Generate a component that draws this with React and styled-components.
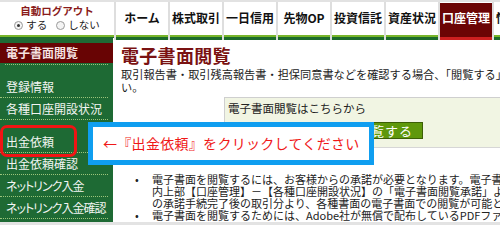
import React from "react";
import styled, { createGlobalStyle, css } from "styled-components";

const Global = createGlobalStyle`
  html, body { margin: 0; padding: 0; background: #fff; }
  body { font-family: "Noto Sans CJK JP", "Noto Sans", sans-serif; overflow: hidden; }
  * { box-sizing: border-box; }
`;

const Page = styled.div`
  position: relative;
  width: 500px;
  height: 225px;
  overflow: hidden;
  background: #fff;
`;

const stripe = css`
  background: linear-gradient(
    to bottom,
    #fff 0 33px,
    #78b52a 33px 35px,
    #1c6b2b 35px 38px
  );
`;

const Header = styled.div`
  display: flex;
  height: 38px;
  border-top: 2px solid #e2e2e2;
  ${stripe};
`;

const Logout = styled.div`
  width: 114px;
  flex: none;
  display: flex;
  flex-direction: column;
  align-items: center;
  padding-top: 3px;
`;

const LogoutTitle = styled.div`
  font-size: 10.5px;
  line-height: 12px;
  font-weight: bold;
  color: #8a1a1a;
`;

const RadioRow = styled.div`
  display: flex;
  align-items: center;
  gap: 3px;
  margin-top: 2px;
  font-size: 10.5px;
  line-height: 12px;
  color: #222;
`;

const Radio = styled.span`
  width: 9px;
  height: 9px;
  border-radius: 50%;
  border: 1px solid #9a9a9a;
  background: #f4f4f4;
  display: inline-flex;
  align-items: center;
  justify-content: center;
  margin-left: ${(p) => (p.$gap ? "6px" : "0")};
  &::after {
    content: "";
    width: 3px;
    height: 3px;
    border-radius: 50%;
    background: ${(p) => (p.$on ? "#333" : "transparent")};
  }
`;

const Tab = styled.div`
  width: 54px;
  flex: none;
  border-left: 2px solid #dedede;
  height: 38px;
  display: flex;
  justify-content: center;
  padding-top: 8px;
  font-size: 12px;
  line-height: 15px;
  font-weight: bold;
  white-space: nowrap;
  overflow: hidden;
  color: ${(p) => (p.$active ? "#fff" : "#111")};
  ${(p) =>
    p.$active
      ? css`
          background: linear-gradient(
            to bottom,
            #fff 0 1px,
            #6b0505 1px 35px,
            #cc2020 35px 38px
          );
        `
      : stripe};
  ${(p) =>
    p.$clip &&
    css`
      justify-content: flex-start;
      padding-left: 2px;
    `}
`;

const Main = styled.div`
  display: flex;
  align-items: flex-start;
  gap: 8px;
`;

const Sidebar = styled.div`
  width: 113px;
  flex: none;
  height: 187px;
  background: #1e6a34;
  padding-top: 5px;
`;

const SideHead = styled.div`
  height: 20px;
  background: #680404;
  color: #f6e2e2;
  font-size: 12px;
  line-height: 20px;
  font-weight: bold;
  padding-left: 6px;
`;

const Dots = styled.div`
  margin: 1px 5px 0;
  border-top: 1px dotted #9cc47a;
`;

const NavGroup = styled.div`
  margin-top: 11px;
`;

const NavItem = styled.div`
  position: relative;
  height: 22px;
  margin-right: 5px;
  padding-left: 6px;
  font-size: 12px;
  line-height: 21px;
  color: #f2f5f2;
  white-space: nowrap;
  font-feature-settings: "palt";
  letter-spacing: ${(p) => (p.$squeeze ? "-1px" : "0")};
  border-bottom: 1px dotted #9cc47a;
`;

const RedRing = styled.span`
  position: absolute;
  left: 0;
  top: -6px;
  width: 77px;
  height: 32px;
  border: 3px solid #f01414;
  border-radius: 7px;
`;

const Content = styled.div`
  flex: 1;
  min-width: 0;
  padding-top: 8px;
`;

const Title = styled.h1`
  margin: 0;
  font-size: 18px;
  line-height: 18px;
  font-weight: bold;
  color: #7a1212;
  letter-spacing: 0.3px;
`;

const Lead = styled.p`
  margin: 4px 0 0;
  font-size: 11.2px;
  line-height: 13px;
  color: #222;
  white-space: nowrap;
`;

const LinkBox = styled.div`
  margin: 3px 0 0 103px;
  height: 51px;
  border-top: 1px solid #cfcfcf;
  border-left: 1px solid #cfcfcf;
  border-bottom: 1px solid #d6d6d6;
  background: #f1f5e3;
  padding: 4px 0 0 3px;
`;

const LinkText = styled.div`
  font-size: 11.5px;
  line-height: 13px;
  color: #222;
  white-space: nowrap;
`;

const ViewButton = styled.div`
  margin: 7px 0 0 119px;
  width: 76px;
  height: 17px;
  background: #5f980c;
  border: 1px solid #3c5f06;
  color: #fff;
  font-size: 13px;
  line-height: 15px;
  letter-spacing: 1px;
  text-align: center;
`;

const Notes = styled.ul`
  list-style: none;
  margin: 25px 0 0 14px;
  padding: 0;
`;

const Note = styled.li`
  display: grid;
  grid-template-columns: 17px auto;
  font-size: 11px;
  line-height: 12px;
  color: #222;
  white-space: nowrap;
`;

const Bullet = styled.span`
  font-size: 11px;
`;

const Callout = styled.div`
  position: absolute;
  left: 88px;
  top: 122px;
  width: 286px;
  height: 43px;
  border: 5px solid #0f9ef0;
  background: #fff;
  color: #f01818;
  font-size: 14px;
  line-height: 33px;
  letter-spacing: 0.3px;
  padding-left: 10px;
  white-space: nowrap;
`;

const BottomEdge = styled.div`
  position: absolute;
  left: 0;
  right: 0;
  bottom: 0;
  height: 3px;
  background: #e3e3e3;
`;

const tabs = ["ホーム", "株式取引", "一日信用", "先物OP", "投資信託", "資産状況", "口座管理"];

export default function App() {
  return (
    <Page>
      <Global />
      <Header>
        <Logout>
          <LogoutTitle>自動ログアウト</LogoutTitle>
          <RadioRow>
            <Radio $on />
            <span>する</span>
            <Radio $gap />
            <span>しない</span>
          </RadioRow>
        </Logout>
        {tabs.map((t) => (
          <Tab key={t} $active={t === "口座管理"}>
            {t}
          </Tab>
        ))}
        <Tab $clip>情報</Tab>
      </Header>
      <Main>
        <Sidebar>
          <SideHead>電子書面閲覧</SideHead>
          <Dots />
          <NavGroup>
            <NavItem>登録情報</NavItem>
            <NavItem>各種口座開設状況</NavItem>
          </NavGroup>
          <NavGroup>
            <NavItem>
              出金依頼
              <RedRing />
            </NavItem>
            <NavItem>出金依頼確認</NavItem>
            <NavItem $squeeze>ネットリンク入金</NavItem>
            <NavItem $squeeze>ネットリンク入金確認</NavItem>
          </NavGroup>
        </Sidebar>
        <Content>
          <Title>電子書面閲覧</Title>
          <Lead>
            取引報告書・取引残高報告書・担保同意書などを確認する場合、「閲覧する」ボタンを押してくださ
            <br />
            い。
          </Lead>
          <LinkBox>
            <LinkText>電子書面閲覧はこちらから</LinkText>
            <ViewButton>閲覧する</ViewButton>
          </LinkBox>
          <Notes>
            <Note>
              <Bullet>•</Bullet>
              <span>
                電子書面を閲覧するには、お客様からの承諾が必要となります。電子書面閲覧承諾は、画面
                <br />
                内上部【口座管理】－【各種口座開設状況】の「電子書面閲覧承諾」より行ってください。
                <br />
                の承諾手続完了後の取引分より、各種書面の電子書面での閲覧が可能となります。
              </span>
            </Note>
            <Note>
              <Bullet>•</Bullet>
              <span>
                電子書面を閲覧するためには、Adobe社が無償で配布しているPDFファイル閲覧ソフト
              </span>
            </Note>
          </Notes>
        </Content>
      </Main>
      <Callout>←『出金依頼』をクリックしてください</Callout>
      <BottomEdge />
    </Page>
  );
}
